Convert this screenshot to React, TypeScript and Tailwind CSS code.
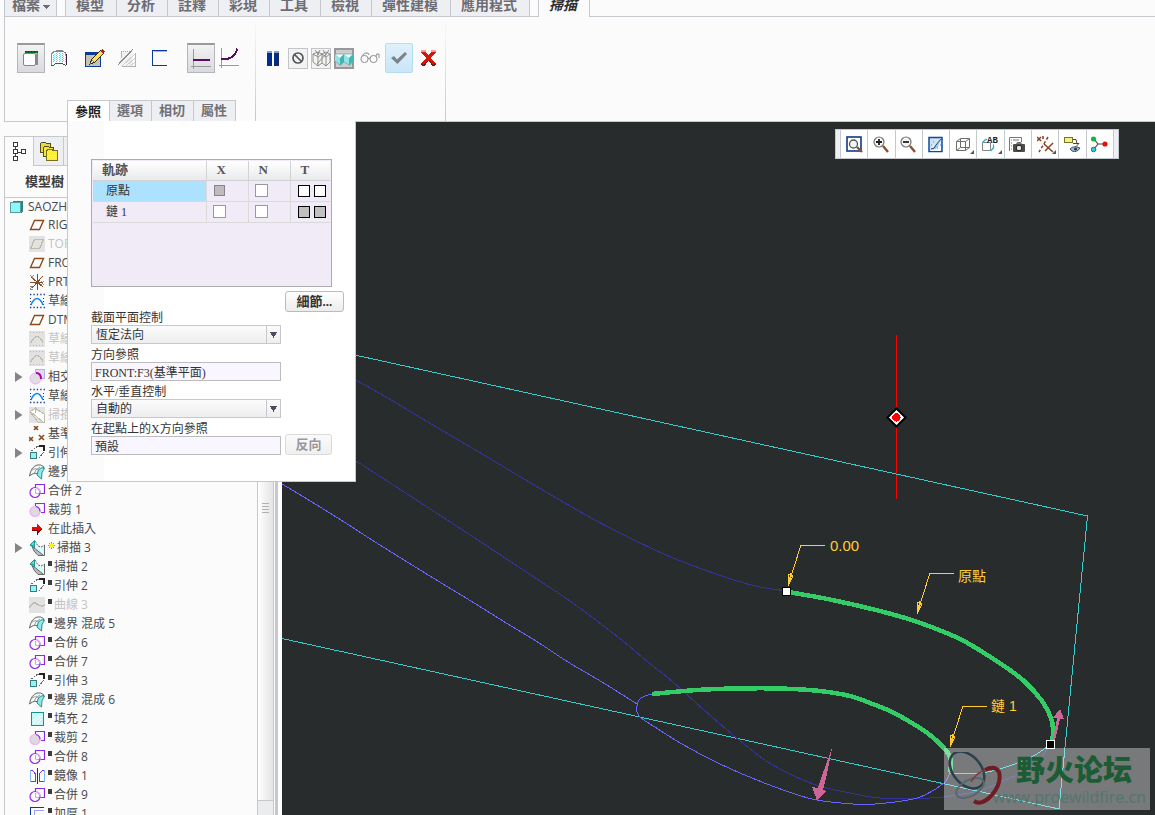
import React from "react";
import type { ReactNode } from "react";

type Point = [number, number];

/** Builds a smooth path through a list of points. */
function curve(points: Point[]): string {
  let d = `M${points[0][0]} ${points[0][1]}`;
  for (let i = 0; i < points.length - 1; i++) {
    const a = points[Math.max(0, i - 1)];
    const b = points[i];
    const c = points[i + 1];
    const e = points[Math.min(points.length - 1, i + 2)];
    d += ` C${b[0] + (c[0] - a[0]) / 6} ${b[1] + (c[1] - a[1]) / 6} ${c[0] - (e[0] - b[0]) / 6} ${c[1] - (e[1] - b[1]) / 6} ${c[0]} ${c[1]}`;
  }
  return d;
}

function Pic({ w, h, children, smooth = false }: { w: number; h: number; children: ReactNode; smooth?: boolean }) {
  return (
    <svg
      width={w}
      height={h}
      viewBox={`0 0 ${w} ${h}`}
      fill="none"
      shapeRendering={smooth ? "auto" : "crispEdges"}
      className="block shrink-0"
      aria-hidden="true"
    >
      {children}
    </svg>
  );
}

/* ---------- Ribbon ---------- */

const ribbonTabs = ["模型", "分析", "註釋", "彩現", "工具", "檢視", "彈性建模", "應用程式"];

function RibbonTabs() {
  return (
    <nav className="flex h-[17px] overflow-hidden pl-1 text-sm leading-[10px] font-bold text-[#6c6c72]">
      <button className="flex items-start gap-[3px] border-x border-b border-[#c5c8cc] bg-[#eeeff2] px-[6px] pl-[7px]">
        <span>檔案</span>
        <span className="pt-[5px]">
          <Pic w={7} h={4}>
            <path d="M0 0h7L3.5 4z" fill="#6c6c72" />
          </Pic>
        </span>
      </button>
      <div className="w-2 border-b border-[#c5c8cc]" />
      <div className="flex border-l border-[#c5c8cc]">
        {ribbonTabs.map((t) => (
          <button key={t} className="flex items-start border-r border-b border-[#c5c8cc] bg-[#eeeff2] pr-3 pl-2.5">
            {t}
          </button>
        ))}
      </div>
      <div className="w-2 border-b border-[#c5c8cc]" />
      <button className="flex items-start border-x border-[#c5c8cc] bg-[#fbfbfc] pr-3 pl-2.5 text-[#2e2e30] italic">掃描</button>
      <div className="flex-1 border-b border-[#c5c8cc]" />
    </nav>
  );
}

function ToolButton({ label, className, children }: { label: string; className: string; children: ReactNode }) {
  return (
    <button aria-label={label} className={`flex shrink-0 items-center justify-center ${className}`}>
      {children}
    </button>
  );
}

const pressed = "h-[30px] w-7 border border-t-2 border-[#b4b6ba] border-t-[#9a9a9a] bg-linear-to-b from-[#f2f2f3] to-[#d9dadf]";

function ShapeTools() {
  return (
    <div className="flex h-[30px] items-center pl-3">
      <ToolButton label="實體" className={pressed}>
        <Pic w={16} h={16}>
          <path d="M2 .500h13M2 1.500h13" stroke="#0b6b25" />
          <path d="M2 .500h13" stroke="#2b2b2b" strokeDasharray="1 2" />
          <path d="M14.500 0v13" stroke="#2a4a34" />
          <path d="M13.500 2v12" stroke="#8a8a8a" strokeWidth="2" />
          <path d="M2 2.500h12" stroke="#bdbdbd" />
          <rect x=".500" y="2.500" width="12" height="12" rx="1.500" fill="#fff" stroke="#858585" shapeRendering="auto" />
        </Pic>
      </ToolButton>
      <ToolButton label="曲面" className="ml-1 h-[30px] w-5">
        <Pic w={18} h={18}>
          <path d="M1 16V6q1-4 6-4h5q5 1 5 4v10q-3-3-8-2.500Q4 14 1 16z" fill="#fff" />
          <path d="M3 13V5M6 13V3M9 13V3M12 13V3M15 13V5" stroke="#30e0f0" strokeDasharray="1 1" />
          <path d="M4 13V4M7 13V3M10 13V3M13 13V4" stroke="#7fe9f2" strokeDasharray="1 1" strokeDashoffset="1" />
          <path d="M1.500 16V6Q2 3 6 2M12 2q4 1 4 4" stroke="#8b8b8b" />
          <path d="M6 1.500h7" stroke="#888" strokeWidth="2" />
          <path d="M16.500 5v11" stroke="#4b1254" />
          <path d="M1 16.500h2l3-2h6l4 2" stroke="#226b35" />
        </Pic>
      </ToolButton>
      <ToolButton label="草繪" className="ml-[15px] h-[30px] w-[22px]">
        <Pic w={20} h={20}>
          <rect x=".500" y="4.500" width="15" height="14" fill="#c8c3ae" stroke="#0a3a9a" />
          <path d="M0 5.500h16" stroke="#0a3a9a" strokeWidth="3" />
          <path d="M5 16l2-5 9-9 3 3-9 9z" fill="#ffe34d" stroke="#3a2c10" />
          <path d="M15 3l2-2 3 2-2 3z" fill="#b3231a" />
          <path d="M5 16l2-4 2 2z" fill="#fff" stroke="#222" strokeWidth=".500" />
        </Pic>
      </ToolButton>
      <ToolButton label="移除材料" className="ml-2.5 h-[30px] w-[22px]">
        <Pic w={20} h={20}>
          <path d="M4 3h12v15H3z" fill="#f2f2f2" />
          <path d="M5 18L18 6M9 18l9-8M13 18l5-4M4 14L14 4" stroke="#d2d2d2" />
          <path d="M4 3.500h12" stroke="#aaa" strokeDasharray="1 1" />
          <path d="M4.500 4v6M18.500 5v13H5" stroke="#b4b4b4" />
          <path d="M1 17L16 1" stroke="#8c8c8c" strokeWidth="1.200" />
        </Pic>
      </ToolButton>
      <ToolButton label="加厚" className="ml-2.5 h-[30px] w-[22px]">
        <Pic w={18} h={18}>
          <path d="M17 1.500H2.500v15H17" stroke="#0a3a9a" strokeWidth="1.200" />
          <path d="M17 2.500H3.500" stroke="#9fb6dd" />
        </Pic>
      </ToolButton>
      <ToolButton label="恆定截面" className={`ml-[17px] ${pressed}`}>
        <Pic w={20} h={22}>
          <path d="M2.500 1v20M0 18.500h20" stroke="#999" />
          <path d="M2 12h17" stroke="#5c0a66" strokeWidth="2" />
        </Pic>
      </ToolButton>
      <ToolButton label="變化截面" className="ml-1 h-[30px] w-5">
        <Pic w={20} h={22}>
          <path d="M2.500 1v20M0 18.500h20" stroke="#999" />
          <path d="M2 12.500c8 0 15-3 16-11" stroke="#5c0a66" strokeWidth="2" />
        </Pic>
      </ToolButton>
    </div>
  );
}

function FeatureTools() {
  const box = "h-[21px] w-5 border border-[#c3c4c7] bg-[#f3f3f4]";
  return (
    <div className="flex h-[30px] items-center pl-2.5">
      <ToolButton label="暫停" className="w-3.5">
        <Pic w={12} h={15}>
          <path d="M0 0h5v15H0zM7 0h5v15H7z" fill="#032d8c" />
          <path d="M0 0h5v2H0zM7 0h5v2H7z" fill="#7f9fd0" />
          <path d="M4.500 2v13H1M11.500 2v13H8" stroke="#16284e" />
        </Pic>
      </ToolButton>
      <ToolButton label="無預覽" className={`ml-2 ${box}`}>
        <Pic w={14} h={14} smooth>
          <circle cx="7" cy="7" r="5" stroke="#55565a" strokeWidth="1.700" />
          <path d="M3.500 3.500l7 7" stroke="#55565a" strokeWidth="1.700" />
        </Pic>
      </ToolButton>
      <ToolButton label="分離預覽" className={`ml-[3px] ${box}`}>
        <Pic w={20} h={19} smooth>
          <path d="M2 5l5-2 4 2v9l-4 3-5-4zM11 5l4-2 4 2v8l-4 4-4-3M2 5l5 3 4-3 4 3 4-3M7 8v9M15 8v9M4 1l4 5M9 1L6 7M12 1l3 5M18 1l-4 6" stroke="#74746d" strokeWidth=".800" />
          <path d="M6 15l8-9" stroke="#8a826e" strokeWidth=".900" />
        </Pic>
      </ToolButton>
      <ToolButton label="已附加預覽" className="ml-[3px] h-[21px] w-5 border-2 border-[#96989a] bg-[#cccdcf]">
        <Pic w={18} h={17} smooth>
          <path d="M0 5h18v6l-4 4-5-3-4 3-5-4z" fill="#8fe3e0" />
          <path d="M0 4h9L5 8zM9 4h9l-4 4z" fill="#f6ffff" />
          <path d="M5 8l4-4v8l-4 4zM14 8l4-4v8l-4 4z" fill="#3eb7b6" />
          <path d="M0 4h18M0 11l5 4 4-3 5 3 4-4" stroke="#7aa5a6" strokeWidth=".800" />
        </Pic>
      </ToolButton>
      <ToolButton label="驗證" className="ml-1.5 w-5">
        <Pic w={20} h={12} smooth>
          <circle cx="4.500" cy="7" r="3.600" stroke="#8e8e8e" />
          <circle cx="13.500" cy="7" r="3.600" stroke="#8e8e8e" />
          <path d="M8 6.500q1-1 2 0M2 4q2-4 6-3l1 2M16 4q0-3 3-2v4" stroke="#8e8e8e" />
        </Pic>
      </ToolButton>
      <ToolButton label="確定" className="ml-[5px] h-[30px] w-7 rounded-xs border border-[#b4dcf2] bg-linear-to-b from-[#dff0fa] to-[#c9e6f7]">
        <Pic w={18} h={14} smooth>
          <path d="M1 7l3-2 3 3.500L15 1l2 2L7.500 13z" fill="#7b8288" />
        </Pic>
      </ToolButton>
      <ToolButton label="取消" className="ml-1.5 w-[18px]">
        <Pic w={17} h={16}>
          <path d="M1 2l4-1 3.500 4L12 1l4 1-5 6 5 6-3 2-4.500-5L4 16l-3-2 5-6z" fill="#d3170b" />
          <path d="M1 1h5M11 1h5" stroke="#f79a98" strokeWidth="2" />
          <path d="M1 14.500l3 1 3.500-4M16 14.500l-3 1-3.500-4" stroke="#7d1009" />
        </Pic>
      </ToolButton>
    </div>
  );
}

const panelTabs = ["選項", "相切", "屬性"];

const smallBox = "m-0 block size-[13px] appearance-none border border-[#98989d] bg-white";
const markBox = "m-0 block size-3 appearance-none border border-black";

function TrackRow({ name, selected, index }: { name: string; selected?: boolean; index: number }) {
  return (
    <tr className="h-[21px]">
      <td className={`border-r border-b border-[#dadada] p-0 pl-[13px] leading-5 ${selected ? "bg-[#ade2ff]" : ""}`}>{name}</td>
      <td className="border-r border-b border-[#dadada] p-0 pl-1.5">
        {selected ? (
          <input type="checkbox" disabled aria-label={`${name} X`} className="m-0 ml-px block size-[11px] appearance-none border border-[#86868a] bg-[#bdbdbd]" />
        ) : (
          <input type="checkbox" aria-label={`${name} X`} className={smallBox} />
        )}
      </td>
      <td className="border-r border-b border-[#dadada] p-0 pl-1.5">
        <input type="checkbox" aria-label={`${name} N`} className={smallBox} />
      </td>
      <td className="border-b border-[#dadada] p-0 pl-[7px]">
        <div className="flex gap-1">
          {[1, 2].map((n) => (
            <input key={n} type="checkbox" aria-label={`${name} T${n}`} className={`${markBox} ${index === 0 ? "bg-white" : "bg-[#c0c0c0]"}`} />
          ))}
        </div>
      </td>
    </tr>
  );
}

function SelectField({ id, label, value }: { id: string; label: string; value: string }) {
  return (
    <div>
      <label htmlFor={id} className="block leading-[13px]">
        {label}
      </label>
      <div className="relative w-[190px]">
        <select
          id={id}
          defaultValue={value}
          className="block h-[19px] w-full appearance-none border border-[#c5c8cc] bg-linear-to-b from-[#fbfbfb] to-[#eeeeef] pl-1 leading-4"
        >
          <option>{value}</option>
        </select>
        <div className="pointer-events-none absolute inset-y-0 right-0 flex w-[15px] items-center justify-center border border-[#c5c8cc]">
          <Pic w={7} h={6}>
            <path d="M0 0h7L3.500 6z" fill="#4b4d5c" />
          </Pic>
        </div>
      </div>
    </div>
  );
}

function InputField({ id, label, value }: { id: string; label: string; value: string }) {
  return (
    <div>
      <label htmlFor={id} className="block leading-[13px]">
        {label}
      </label>
      <input id={id} defaultValue={value} className="block h-[19px] w-[190px] border border-[#bcbcc0] bg-[#f9f6ff] pl-[3px] leading-4" />
    </div>
  );
}

function ReferencePanel() {
  return (
    <section className="absolute top-full left-[62px] z-20 w-[289px] border border-t-0 border-[#c5c8cc] bg-linear-to-r from-[#fbfbfc] from-0% via-[#fbfbfc] via-[36px] to-white to-[36px] pt-[38px] pr-[11px] pb-[26px] pl-[23px] font-['Liberation_Serif','Noto_Sans_CJK_TC',serif] text-xs text-[#333]">
      <div className="h-32 w-[241px] border border-[#aaacb0] bg-[#f1ebf8] p-px">
        <table className="w-full table-fixed border-collapse">
          <colgroup>
            <col className="w-[113px]" />
            <col className="w-[42px]" />
            <col className="w-[42px]" />
            <col />
          </colgroup>
          <thead>
            <tr className="h-[19px] bg-linear-to-b from-white to-[#e9eaec] text-left text-[13px] leading-[18px] text-[#55555a]">
              <th className="border-r border-b border-[#d0d2d4] p-0 pl-[9px]">軌跡</th>
              <th className="border-r border-b border-[#d0d2d4] p-0 pl-2.5">X</th>
              <th className="border-r border-b border-[#d0d2d4] p-0 pl-2.5">N</th>
              <th className="border-b border-[#d0d2d4] p-0 pl-2.5">T</th>
            </tr>
          </thead>
          <tbody>
            <TrackRow name="原點" selected index={0} />
            <TrackRow name="鏈 1" index={1} />
          </tbody>
        </table>
      </div>
      <div className="mt-1 flex justify-end">
        <button className="h-[21px] w-[59px] rounded-[3px] border border-[#b9bbbe] bg-linear-to-b from-white to-[#ececed] text-[13px] leading-[17px] font-bold">
          細節...
        </button>
      </div>
      <div className="flex flex-col gap-[5px]">
        <SelectField id="plane-control" label="截面平面控制" value="恆定法向" />
        <InputField id="direction-ref" label="方向參照" value="FRONT:F3(基準平面)" />
        <SelectField id="hv-control" label="水平/垂直控制" value="自動的" />
        <div className="flex items-end gap-1">
          <InputField id="x-direction" label="在起點上的X方向參照" value="預設" />
          <button disabled className="h-[21px] w-[47px] rounded-[3px] border border-[#dadada] bg-linear-to-b from-[#fafafa] to-[#f0f0f1] text-[13px] leading-[17px] font-bold text-[#98989c]">
            反向
          </button>
        </div>
      </div>
    </section>
  );
}

function Ribbon() {
  return (
    <div className="relative z-20 ml-1 flex h-[105px] shrink-0 border-b border-l border-[#c5c8cc]">
      <div className="flex w-[250px] flex-col justify-between pt-[26px]">
        <ShapeTools />
        <div className="-mb-px flex pl-[62px] text-[13px] leading-[18px] font-bold text-[#717176]">
          <button className="h-[22px] border-x border-t border-[#c5c8cc] bg-white pr-2 pl-[7px] text-[#1e1e20]">參照</button>
          {panelTabs.map((t) => (
            <button key={t} className="h-[22px] border-y border-r border-[#c5c8cc] bg-[#eeeff2] pr-2 pl-[7px]">
              {t}
            </button>
          ))}
        </div>
      </div>
      <div className="w-px bg-linear-to-b from-transparent to-[#c5c8cc]" />
      <div className="w-[189px] pt-[26px]">
        <FeatureTools />
      </div>
      <div className="w-px bg-linear-to-b from-transparent to-[#c5c8cc]" />
      <ReferencePanel />
    </div>
  );
}

/* ---------- Model tree ---------- */

type IconName =
  | "part" | "plane" | "planeOff" | "csys" | "sketch" | "sketchOff" | "intersect" | "sweep" | "sweepOff"
  | "points" | "extrude" | "boundary" | "merge" | "trim" | "insert" | "curveOff" | "fill" | "mirror" | "thicken";

function TreeIcon({ name }: { name: IconName }) {
  const body: Record<IconName, ReactNode> = {
    part: (
      <>
        <path d="M2 4l2-2h10v10l-2 2z" fill="#2f8584" />
        <rect x="1.500" y="3.500" width="10" height="10" fill="#8cfafa" stroke="#5b9c9c" />
      </>
    ),
    plane: <path d="M5.500 3.500h9l-4 9h-9z" stroke="#8b4a1c" strokeWidth="1.400" fill="#fff" />,
    planeOff: (
      <>
        <rect width="16" height="16" fill="#e2e2e2" />
        <path d="M5.500 3.500h9l-4 9h-9z" stroke="#c0bca8" strokeWidth="1.300" />
      </>
    ),
    csys: (
      <>
        <path d="M8 0v16M2 3l12 10M14 2L3 14M1 8h13" stroke="#8b4a1c" />
        <path d="M1 1l2 2 2-2M3 3v2M12 7l3 4M15 7l-3 4M1 12h3l-3 3h3" stroke="#777" strokeWidth=".800" />
      </>
    ),
    sketch: (
      <>
        <path d="M1 1.500h15M1 14.500h15" stroke="#17348f" strokeWidth="1.300" strokeDasharray="1.300 2.100" />
        <path d="M1.500 5v8M14.500 5v8" stroke="#17348f" strokeDasharray="1 2" />
        <path d="M2 12q1-3 3-5 3-3 6 0 2 2 3 5" stroke="#0a84f0" strokeWidth="1.600" />
      </>
    ),
    sketchOff: (
      <>
        <rect width="16" height="16" fill="#e2e2e2" />
        <path d="M1 1.500h15M1 14.500h15" stroke="#c0bca8" strokeDasharray="1 2" />
        <path d="M2 12q1-3 3-5 3-3 6 0 2 2 3 5" stroke="#c0bca8" strokeWidth="1.300" />
      </>
    ),
    intersect: (
      <>
        <rect x="6.500" y=".500" width="9" height="9" fill="#dcdcf6" stroke="#b7b0ee" />
        <circle cx="6.500" cy="9.500" r="5.500" fill="#e2dce4" stroke="#eeb0f0" />
        <path d="M7 4q5 0 5 6" stroke="#b4009a" strokeWidth="2" />
      </>
    ),
    sweep: (
      <>
        <path d="M6 3l3 4 6-1v9h-2L4 7z" fill="#d9fafa" />
        <path d="M3.500 7L14 15H9l-4-4z" fill="#bcbcbc" />
        <path d="M6 1l3 5 3 1 4-2" stroke="#555" strokeWidth=".900" strokeDasharray="2 1" />
        <path d="M15.500 5v10.500H9L5 11 3 6.500M4 7l10 8" stroke="#555" strokeWidth=".900" />
        <path d="M1 5l4.500-4.500V8zM1 5l4 1" fill="#58dada" stroke="#158c8c" strokeWidth=".900" />
      </>
    ),
    sweepOff: (
      <>
        <rect width="16" height="16" fill="#e2e2e2" />
        <path d="M4 2l11 5v8L2 5z" fill="#fff" />
        <path d="M6 1l9 6v8H9L1 5l5-4v5M2 5l12 10" stroke="#c0bca8" />
      </>
    ),
    points: (
      <path d="M5 0l4 4M9 0L5 4M0 11l4 4M4 11l-4 4M10 9l5 5M15 9l-5 5" stroke="#8b4a1c" strokeWidth="1.600" />
    ),
    extrude: (
      <>
        <path d="M2 6l7-5h6v6l-6 7" stroke="#666" strokeDasharray="2 1" />
        <path d="M10 1h5v5" stroke="#222" strokeWidth="1.300" />
        <rect x="1.500" y="7.500" width="6" height="6" fill="#8cf6f6" stroke="#3c7b7b" />
      </>
    ),
    boundary: (
      <>
        <path d="M.500 12Q2 3 8 1q4-1 7 2l-3 4-1 4q-5-4-10.500 1z" fill="#f3fbfb" stroke="#555" strokeWidth=".900" />
        <path d="M3 6q4-3 8 1M5 10Q6 5 11 3" stroke="#888" strokeWidth=".800" />
        <path d="M9 7q2-4 6.500-3Q12 8 12.500 15L8 11z" fill="#8beae8" stroke="#19807f" strokeWidth=".900" />
      </>
    ),
    merge: (
      <>
        <path d="M6.500 5V1.500h9v9H12" stroke="#8e2be2" strokeWidth="1.200" />
        <path d="M6.500 10.500V6M7 10.500h5" stroke="#a9b0f4" />
        <circle cx="6" cy="9.500" r="5" stroke="#8e2be2" strokeWidth="1.200" />
        <path d="M7 4.600q4 1 4 5" stroke="#eeb0f0" strokeWidth="1.200" />
      </>
    ),
    trim: (
      <>
        <circle cx="6" cy="9.500" r="5" fill="#ddd9de" stroke="#eeb0f0" strokeWidth="1.200" />
        <path d="M6.500 4V1.500h9v9H12M7 4.500q4 1 4 5" stroke="#8e2be2" strokeWidth="1.200" />
      </>
    ),
    insert: (
      <>
        <path d="M3 6h5V2l5 6-5 6v-4H3z" fill="#f00606" />
        <path d="M3 9.500h5.500v3l4-4.500" stroke="#6d0505" strokeWidth="1.500" />
      </>
    ),
    curveOff: (
      <>
        <rect width="16" height="16" fill="#e2e2e2" />
        <path d="M0 11q4-7 8-4t8 1" stroke="#c0bca8" strokeWidth="1.600" />
      </>
    ),
    fill: (
      <>
        <rect x="2.500" y="1.500" width="12" height="13" fill="#c6f8f8" stroke="#129393" />
        <path d="M4 10l7-7M4 13L13 4M8 13l5-5" stroke="#fff" />
      </>
    ),
    mirror: (
      <>
        <path d="M8.500 0v16" stroke="#333" />
        <path d="M1.500 2q5 1 5 6v5.500h-5M15.500 2q-5 1-5 6v5.500h5" stroke="#8e2be2" />
        <path d="M1.500 2v12M15.500 2v12" stroke="#86b6f5" />
      </>
    ),
    thicken: (
      <>
        <path d="M15 1.500H1.500V16" stroke="#0a3a9a" strokeWidth="1.300" />
        <path d="M15 4.500H5.500V16" stroke="#9aa6ee" />
      </>
    ),
  };
  return (
    <Pic w={16} h={16} smooth={["intersect", "merge", "trim", "boundary", "sweep", "sketch", "points", "plane"].includes(name)}>
      {body[name]}
    </Pic>
  );
}

type Item = { icon: IconName; text: string; open?: boolean; off?: boolean; mark?: "square" | "star" };

const items: Item[] = [
  { icon: "plane", text: "RIGHT" },
  { icon: "planeOff", text: "TOP", off: true },
  { icon: "plane", text: "FRONT" },
  { icon: "csys", text: "PRT_CSYS_DEF" },
  { icon: "sketch", text: "草繪 1" },
  { icon: "plane", text: "DTM1" },
  { icon: "sketchOff", text: "草繪 2", off: true },
  { icon: "sketchOff", text: "草繪 3", off: true },
  { icon: "intersect", text: "相交 1", open: true },
  { icon: "sketch", text: "草繪 4" },
  { icon: "sweepOff", text: "掃描 1", open: true, off: true },
  { icon: "points", text: "基準點" },
  { icon: "extrude", text: "引伸 1", open: true },
  { icon: "boundary", text: "邊界 混成 2" },
  { icon: "merge", text: "合併 2" },
  { icon: "trim", text: "裁剪 1" },
  { icon: "insert", text: "在此插入" },
  { icon: "sweep", text: "掃描 3", open: true, mark: "star" },
  { icon: "sweep", text: "掃描 2", mark: "square" },
  { icon: "extrude", text: "引伸 2", mark: "square" },
  { icon: "curveOff", text: "曲線 3", off: true, mark: "square" },
  { icon: "boundary", text: "邊界 混成 5", mark: "square" },
  { icon: "merge", text: "合併 6", mark: "square" },
  { icon: "merge", text: "合併 7", mark: "square" },
  { icon: "extrude", text: "引伸 3", mark: "square" },
  { icon: "boundary", text: "邊界 混成 6", mark: "square" },
  { icon: "fill", text: "填充 2", mark: "square" },
  { icon: "trim", text: "裁剪 2", mark: "square" },
  { icon: "merge", text: "合併 8", mark: "square" },
  { icon: "mirror", text: "鏡像 1", mark: "square" },
  { icon: "merge", text: "合併 9", mark: "square" },
  { icon: "thicken", text: "加厚 1", mark: "square" },
];

function TreeRow({ item }: { item: Item }) {
  return (
    <li className="flex h-[19px] items-center whitespace-nowrap">
      <span className="flex w-6 shrink-0 pl-2.5">
        {item.open && (
          <Pic w={8} h={10} smooth>
            <path d="M0 0v10l7.500-5z" fill="#858585" />
          </Pic>
        )}
      </span>
      <TreeIcon name={item.icon} />
      {item.mark === "square" && <span className="mb-1.5 ml-[3px] h-[5px] w-1 bg-[#3c3c3c]" />}
      {item.mark === "star" && (
        <span className="mb-1 ml-[3px]">
          <Pic w={7} h={7} smooth>
            <path d="M3.500 0v7M0 3.500h7M1 1l5 5M6 1L1 6" stroke="#8a7c00" strokeWidth=".800" />
            <circle cx="3.500" cy="3.500" r="2.200" fill="#fff200" />
          </Pic>
        </span>
      )}
      <span className={`${item.mark ? "ml-0.5" : "ml-[3px]"} ${item.off ? "text-[#c3c3c3]" : "text-[#4a4a4a]"}`}>
        {item.text}
      </span>
    </li>
  );
}

function ModelTree() {
  return (
    <aside className="flex w-[282px] shrink-0 pt-3.5 pl-1">
      <div className="flex min-w-0 flex-1 flex-col overflow-hidden border-l border-[#c5c8cc]">
        <div className="flex h-[30px] shrink-0">
          <button aria-label="模型樹" className="flex w-7 items-center justify-center border-t border-[#c5c8cc]">
            <Pic w={14} h={20}>
              <path d="M3 4v12M3 10h6" stroke="#444" />
              <path d="M1.500.500h4v4h-4zM1.500 7.500h4v4h-4zM1.500 14.500h4v4h-4zM9.500 7.500h4v4h-4z" stroke="#3a3a3a" fill="#fff" />
            </Pic>
          </button>
          <button aria-label="資料夾瀏覽器" className="flex w-[31px] items-center justify-center border border-[#c5c8cc] bg-[#eeeff2]">
            <Pic w={20} h={20}>
              <path d="M1 11V3l2-2h3l1 1h4v9z" fill="#e8d93c" stroke="#555020" />
              <path d="M4 15V7l2-2h3l1 1h4v9z" fill="#f1e340" stroke="#555020" />
              <path d="M7.500 19V10l2-2h3l1 1h5v10z" fill="#ffee38" stroke="#77701c" />
              <path d="M9 14h8M10 16h7" stroke="#fff7a0" strokeDasharray="1 1" />
            </Pic>
          </button>
          <div className="w-6 border-y border-[#c5c8cc] bg-[#eeeff2]" />
        </div>
        <h2 className="h-8 shrink-0 border-b border-[#c5c8cc] pl-5 text-[13px] leading-[31px] font-bold text-[#3c3c3c]">模型樹</h2>
        <div className="font-['Open_Sans','Noto_Sans_CJK_TC',sans-serif] text-xs leading-[19px]">
          <div className="flex h-[17px] items-center gap-[3px] pl-1 text-[#4a4a4a]">
            <TreeIcon name="part" />
            <span>SAOZH</span>
          </div>
          <ul>
            {items.map((item, i) => (
              <TreeRow key={i} item={item} />
            ))}
          </ul>
        </div>
      </div>
      <div className="flex w-[17px] flex-col border-x border-[#c5c8cc] bg-[#ebecee]">
        <div className="mb-3.5 flex-1 border-b border-[#c5c8cc] bg-linear-to-r from-white via-[#f1f1f2] to-[#e4e4e6]">
          <div className="flex flex-col items-center gap-0.5 pt-[367px]">
            {[0, 1, 2, 3].map((n) => (
              <span key={n} className="h-px w-[7px] bg-[#b0b1b4]" />
            ))}
          </div>
        </div>
      </div>
      <div className="ml-px w-[3px] bg-[#c5c8cc]" />
      <div className="w-1 bg-white" />
    </aside>
  );
}

/* ---------- Graphics window ---------- */

const viewTools: { label: string; pic: ReactNode; more?: boolean }[] = [
  {
    label: "重新調整",
    pic: (
      <>
        <rect x="1" y="1" width="14" height="14" stroke="#0d3a86" strokeWidth="1.600" fill="#fff" />
        <circle cx="7.500" cy="8" r="4" stroke="#555" strokeWidth="1.300" fill="#f3f6f8" />
        <path d="M11 11l5 5" stroke="#8a5130" strokeWidth="2.400" />
      </>
    ),
  },
  {
    label: "放大",
    pic: (
      <>
        <circle cx="6" cy="6" r="5" stroke="#777" strokeWidth="1.200" fill="#f5f5f5" />
        <path d="M3 6h6M6 3v6" stroke="#222" strokeWidth="1.800" />
        <path d="M10 10l5 6" stroke="#8a5130" strokeWidth="2.400" />
      </>
    ),
  },
  {
    label: "縮小",
    pic: (
      <>
        <circle cx="6" cy="6" r="5" stroke="#777" strokeWidth="1.200" fill="#f5f5f5" />
        <path d="M3 6h6" stroke="#222" strokeWidth="1.800" />
        <path d="M10 10l5 6" stroke="#8a5130" strokeWidth="2.400" />
      </>
    ),
  },
  {
    label: "重新繪製",
    pic: (
      <>
        <rect x="1" y="1.500" width="13" height="14" stroke="#0d4aa0" strokeWidth="1.500" fill="#cfe3f7" />
        <path d="M2 15l3-5 8-6v11z" fill="#f4f9fd" />
        <path d="M2 13q4-1 5-4l6-6-3 8q-3 4-8 2z" fill="#a9c6e6" />
        <path d="M3 13q4 0 5-4l5-6" stroke="#1d4f94" />
        <path d="M5 6h1M9 12h1M12 9h1M3 9h1" stroke="#4b8fd0" />
      </>
    ),
  },
  {
    label: "顯示樣式",
    more: true,
    pic: <path d="M1.500 5.500h9v9h-9zM5.500 2.500h9v9h-9zM1.500 5.500l4-3M10.500 5.500l4-3M10.500 14.500l4-3M1.500 14.500l4-3" stroke="#6f6f6f" />,
  },
  {
    label: "已儲存方位",
    more: true,
    pic: (
      <>
        <path d="M.500 6.500h8v8h-8zM8.500 14.500l3-3V8.500" stroke="#888" />
        <path d="M5 3.500H3.500l-3 3M11.500 10v2l-3 3" stroke="#34bccb" strokeWidth="1.500" />
        <text x="5" y="7" fill="#222" fontSize="9" fontWeight="bold" fontFamily="Liberation Mono">AB</text>
      </>
    ),
  },
  {
    label: "檢視管理員",
    pic: (
      <>
        <path d="M.500 15V1.500h12V6M2 4h1M4 4h6M2 7h1M2 10h1M2 13h1" stroke="#777" />
        <rect x="4" y="8" width="12" height="8" rx="1" fill="#4d4d4a" />
        <path d="M7 8l1-2h4l1 2z" fill="#777" />
        <circle cx="10" cy="12" r="2.800" fill="#e5e8ea" stroke="#1a1a1a" />
      </>
    ),
  },
  {
    label: "基準顯示",
    more: true,
    pic: (
      <>
        <path d="M0 1l4 4M4 1L0 5M7 8l9 8M16 7l-8 8" stroke="#8b3f20" strokeWidth="1.500" />
        <path d="M11 1L2 16M6 0v4" stroke="#8b3f20" strokeWidth="1.500" strokeDasharray="3 2" />
      </>
    ),
  },
  {
    label: "註釋顯示",
    pic: (
      <>
        <rect x=".500" y="1.500" width="8" height="5" fill="#f3f08a" stroke="#77751f" />
        <path d="M9 3.500h3l1 4M9 7.500h6l-3 3" stroke="#444" />
        <path d="M6 13q4-4 10-1-3 5-8 3z" fill="#a6bdd0" stroke="#3c5061" />
        <circle cx="11.500" cy="13" r="1.600" fill="#2a3d4f" />
      </>
    ),
  },
  {
    label: "旋轉中心",
    pic: (
      <>
        <path d="M3 3l4 5h7M7 8l-4 5" stroke="#444" strokeWidth="1.200" />
        <circle cx="2.500" cy="3" r="2.600" fill="#12b83c" />
        <circle cx="14" cy="8" r="2.600" fill="#e01010" />
        <circle cx="2.500" cy="13.500" r="2.300" fill="#30c8de" stroke="#187a8a" />
      </>
    ),
  },
];

function ViewToolbar() {
  return (
    <div className="absolute inset-x-0 top-[7px] flex justify-end pr-9">
      <div className="flex h-[30px] w-[284px] border border-[#c5c8cc] bg-white">
        <div className="w-1 bg-[#eeeff2]" />
        {viewTools.map((t) => (
          <button key={t.label} aria-label={t.label} className="relative flex flex-1 items-center justify-center border-l border-[#c5c8cc]">
            <Pic w={17} h={17} smooth>
              {t.pic}
            </Pic>
            {t.more && (
              <span className="absolute right-0.5 bottom-1">
                <Pic w={4} h={4} smooth>
                  <path d="M4 0v4H0z" fill="#555" />
                </Pic>
              </span>
            )}
          </button>
        ))}
        <div className="w-[5px] border-l border-[#c5c8cc] bg-[#eeeff2]" />
      </div>
    </div>
  );
}

const upperTrack: Point[] = [[340, 371], [356, 380], [386, 397], [421, 418], [455, 438], [489, 458], [524, 479], [558, 499], [595, 520], [634, 540], [678, 560], [734, 580], [760, 587], [787, 591]];
const middleTrack: Point[] = [[340, 451], [356, 461], [384, 479], [415, 499], [447, 520], [478, 540], [508, 560], [540, 581], [570, 601], [597, 621], [623, 641], [648, 662], [673, 682], [695, 702], [719, 723], [744, 744], [771, 764], [813, 784], [850, 793], [880, 798], [930, 798], [957, 795], [982, 790], [1000, 782], [1017, 775], [1035, 764], [1043, 755], [1049, 746]];
const lowerTrack: Point[] = [[282, 484], [307, 499], [341, 520], [372, 540], [404, 560], [438, 581], [471, 601], [503, 621], [536, 641], [568, 662], [602, 682], [637, 704]];
const loop: Point[] = [[652, 694], [645, 696], [639, 700], [637, 706], [637, 712], [641, 718], [658, 729], [682, 744], [720, 764], [767, 784], [812, 799], [853, 804], [875, 804], [908, 800], [925, 795], [944, 783], [949, 775], [950, 771]];
const originEdge: Point[] = [[788, 592], [830, 599.5], [880, 611], [916, 621.5], [960, 639], [998, 662], [1024, 681], [1042, 701], [1051, 718], [1053, 730], [1052, 744]];
const chainEdge: Point[] = [[652, 694], [697, 690], [735, 688.5], [780, 688.5], [820, 691], [850, 696], [870, 703], [890, 711], [912, 723], [930, 735], [944, 748], [950, 757], [951, 765], [950, 772]];
const joinEdge: Point[] = [[950, 773], [980, 773], [1000, 769], [1020, 762], [1035, 755], [1047, 747]];

function Leader({ x, y }: { x: number; y: number }) {
  return (
    <path
      d={`M${x + 37} ${y - 41}H${x + 13}L${x} ${y}l1-12 4 2-5 10 3-13 1 4`}
      stroke="#ffcc33"
      fill="none"
    />
  );
}

function Scene() {
  return (
    <svg
      viewBox="282 122 873 693"
      preserveAspectRatio="xMinYMin slice"
      className="absolute inset-0 h-full w-full font-['Liberation_Sans','Noto_Sans_CJK_TC',sans-serif]"
      fill="none"
      shapeRendering="crispEdges"
      role="img"
      aria-label="模型"
    >
      <path d="M896.500 335v164" stroke="#f00" />
      <path d="M282 339L1087.500 516 1059 809 282 638.500" stroke="#33cccc" />
      <path d={curve(upperTrack)} stroke="#333399" />
      <path d={curve(middleTrack)} stroke="#333399" />
      <path d={curve(lowerTrack)} stroke="#6666ff" />
      <path d={curve(loop)} stroke="#6666ff" />
      <path d={curve(joinEdge)} stroke="#33cccc" />
      <path d={curve(originEdge)} stroke="#33cc66" strokeWidth="4.500" />
      <path d={curve(chainEdge)} stroke="#33cc66" strokeWidth="4.500" />
      <path d="M832 748l-5 26-4 16 4 1-10 9-5-13 6 1 6-18z" fill="#cc6699" />
      <path d="M1052 744l5-26-4 0 7-9 4 10-4 0-6 26z" fill="#cc6699" />
      <path d="M896.500 408.500l9 9-9 9-9-9z" fill="#fff" stroke="#000" strokeWidth="2" shapeRendering="auto" />
      <circle cx="896.500" cy="417.500" r="4.200" fill="#f00" />
      <rect x="782.500" y="587.500" width="8" height="8" fill="#fff" stroke="#000" />
      <rect x="1046.500" y="740.500" width="8" height="8" fill="#000" stroke="#fff" />
      <Leader x={788} y={586} />
      <Leader x={917} y={614} />
      <Leader x={950} y={747} />
      <g fill="#ffcc33" fontSize="14">
        <text x="830" y="551" fontSize="15">0.00</text>
        <text x="958" y="581">原點</text>
        <text x="991" y="711">鏈 1</text>
      </g>
    </svg>
  );
}

function Watermark() {
  return (
    <div className="absolute right-[5px] bottom-[5px] h-[62px] w-[206px] bg-white/37">
      <div className="absolute top-1 left-0.5">
        <Pic w={60} h={56} smooth>
          <ellipse cx="21" cy="18" rx="21" ry="14" transform="rotate(50 21 18)" stroke="#2c3f4c" strokeWidth="2.500" />
          <ellipse cx="24" cy="36" rx="15" ry="8" transform="rotate(-28 24 36)" stroke="#5a666e" strokeWidth="2" />
          <path d="M39 18q10-5 14 2 3 12-8 24-10 10-17 5" stroke="#6e1d22" strokeWidth="4" />
          <path d="M39 18Q29 22 25 30" stroke="#7c3a3f" strokeWidth="1.500" />
        </Pic>
      </div>
      <div className="flex h-full flex-col items-end pr-1 font-['Open_Sans','Noto_Sans_CJK_SC',sans-serif]">
        <span className="pr-3.5 font-['Noto_Sans_CJK_SC',sans-serif] text-[29px] leading-[40px] font-black text-[#1b5c35]">野火论坛</span>
        <span className="text-base leading-[18px] text-[#52756e]">www.proewildfire.cn</span>
      </div>
    </div>
  );
}

export default function App() {
  return (
    <div className="flex h-screen flex-col overflow-hidden bg-[#fbfbfc] font-['Liberation_Sans','Noto_Sans_CJK_TC',sans-serif]">
      <RibbonTabs />
      <Ribbon />
      <div className="flex min-h-0 flex-1">
        <ModelTree />
        <main className="relative min-w-0 flex-1 overflow-hidden bg-[#282c2d]">
          <Scene />
          <ViewToolbar />
          <Watermark />
        </main>
      </div>
    </div>
  );
}
